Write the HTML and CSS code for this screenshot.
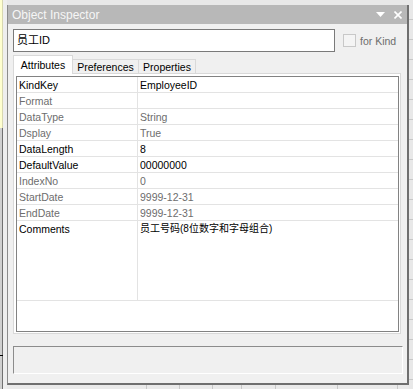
FILE: index.html
```html
<!DOCTYPE html>
<html lang="zh">
<head>
    <meta charset="UTF-8">
    <title>Object Inspector</title>
    <link rel="stylesheet" href="styles.css">
</head>
<body>
    <div class="desk">
        <div class="strip">
            <div class="note"></div>
            <div class="rest"><span class="tick"></span></div>
        </div>

        <div class="middle">
            <div class="window">
                <div class="titlebar">
                    <span class="title">Object Inspector</span>
                    <span class="buttons">
                        <svg width="9" height="5" viewBox="0 0 9 5"><polygon points="0,0 9,0 4.5,5" fill="#fff"/></svg>
                        <svg width="8" height="8" viewBox="0 0 8 8"><path d="M0.5 0.5 L7.5 7.5 M7.5 0.5 L0.5 7.5" stroke="#fff" stroke-width="1.6"/></svg>
                    </span>
                </div>

                <div class="body">
                    <div class="toprow">
                        <div class="namebox">员工ID</div>
                        <label class="forkind"><span class="chk"></span>for Kind</label>
                    </div>

                    <div class="tabs">
                        <div class="tab active">Attributes</div>
                        <div class="tab pref">Preferences</div>
                        <div class="tab prop">Properties</div>
                    </div>

                    <div class="panel">
                        <div class="grid">
                            <div class="row"><div class="key">KindKey</div><div class="val">EmployeeID</div></div>
                            <div class="row off"><div class="key">Format</div><div class="val"></div></div>
                            <div class="row off"><div class="key">DataType</div><div class="val">String</div></div>
                            <div class="row off"><div class="key">Dsplay</div><div class="val">True</div></div>
                            <div class="row"><div class="key">DataLength</div><div class="val">8</div></div>
                            <div class="row"><div class="key">DefaultValue</div><div class="val">00000000</div></div>
                            <div class="row off"><div class="key">IndexNo</div><div class="val">0</div></div>
                            <div class="row off"><div class="key">StartDate</div><div class="val">9999-12-31</div></div>
                            <div class="row off"><div class="key">EndDate</div><div class="val">9999-12-31</div></div>
                            <div class="row tall"><div class="key">Comments</div><div class="val cjk">员工号码(8位数字和字母组合)</div></div>
                            <div class="filler"></div>
                        </div>
                    </div>

                    <div class="status"></div>
                </div>
            </div>
            <div class="sheet">
                <span style="width:139px"></span>
                <span style="width:32px"></span>
                <span style="width:32px"></span>
                <span style="width:28px"></span>
                <span style="width:33px"></span>
                <span style="width:61px"></span>
                <span style="width:59px"></span>
            </div>
        </div>

        <div class="rightside"></div>
    </div>
</body>
</html>
```

FILE: styles.css
```css
body {
    margin: 0;
    padding: 0;
    background-color: #e8e8e8;
    font-family: 'Liberation Sans', Arial, sans-serif;
    font-size: 10.5px;
    color: #000;
}
.desk {
    display: flex;
    width: 413px;
    height: 389px;
    overflow: hidden;
}

/* left edge of the desktop behind */
.strip {
    width: 7px;
    display: flex;
    flex-direction: column;
    background: #eeeeee;
}
.strip .note {
    width: 2px;
    height: 128px;
    background: #ffffd0;
    border-right: 1px solid #d8d8b0;
}
.strip .rest {
    flex: 1;
    width: 2px;
    background: #d0d0d0;
    border-right: 1px solid #707070;
    position: relative;
}
.strip .tick {
    position: absolute;
    left: 0;
    top: 227px;
    width: 3px;
    height: 1px;
    background: #000;
}

.middle {
    width: 402px;
    display: flex;
    flex-direction: column;
    padding-top: 5px;
}
.window {
    height: 378px;
    border-left: 1px solid #8c8c8c;
    border-right: 2px solid #6f6f6f;
    border-bottom: 2px solid #6f6f6f;
    background: #f0f0f0;
    display: flex;
    flex-direction: column;
}
.titlebar {
    height: 19px;
    background: #b8b8b8;
    display: flex;
    align-items: center;
    justify-content: space-between;
    padding: 0 5px 0 4px;
}
.titlebar .title {
    color: #f6f6f6;
    font-size: 12px;
}
.titlebar .buttons {
    display: flex;
    align-items: center;
    gap: 9px;
}
.body {
    flex: 1;
    padding: 5px 0 0 5px;
    display: flex;
    flex-direction: column;
}
.toprow {
    display: flex;
    align-items: center;
    height: 23px;
}
.namebox {
    box-sizing: border-box;
    width: 322px;
    height: 23px;
    border: 1px solid #7a7a7a;
    background: #fff;
    padding: 0 3px;
    line-height: 21px;
    font-size: 11px;
    font-family: 'Liberation Sans', 'Noto Sans CJK SC', sans-serif;
}
.forkind {
    display: flex;
    align-items: center;
    margin-left: 8px;
    color: #6d6d6d;
    font-size: 10.5px;
}
.chk {
    box-sizing: border-box;
    width: 13px;
    height: 13px;
    border: 1px solid #c8c8c8;
    background: #f4f4f4;
    margin-right: 4px;
}

.tabs {
    display: flex;
    margin-top: 3px;
    height: 18px;
    align-items: flex-end;
}
.tab {
    box-sizing: border-box;
    height: 14px;
    border: 1px solid #d9d9d9;
    border-bottom: none;
    text-align: center;
    line-height: 14px;
    background: #f0f0f0;
}
.tab.active {
    width: 60px;
    height: 19px;
    margin-bottom: -1px;
    background: #fff;
    line-height: 19px;
    position: relative;
}
.tab.pref {
    width: 66px;
    border-left: none;
}
.tab.prop {
    width: 57px;
    border-left: none;
}

.panel {
    box-sizing: border-box;
    width: 388px;
    height: 261px;
    border: 1px solid #d9d9d9;
    background: #fff;
    padding: 2px 1px 1px 2px;
}
.grid {
    box-sizing: border-box;
    height: 256px;
    border: 1px solid #828282;
    display: flex;
    flex-direction: column;
}
.row {
    display: flex;
    height: 16px;
    box-sizing: border-box;
    border-bottom: 1px solid #e3e3e3;
    line-height: 16px;
}
.row.tall {
    height: 80px;
}
.row.off {
    color: #6d6d6d;
}
.key {
    box-sizing: border-box;
    width: 121px;
    padding-left: 2px;
    border-right: 1px solid #e3e3e3;
}
.val {
    flex: 1;
    padding-left: 2px;
}
.val.cjk {
    font-family: 'Liberation Sans', 'Noto Sans CJK SC', sans-serif;
    font-size: 10px;
}
.filler {
    flex: 1;
}

.status {
    box-sizing: border-box;
    width: 390px;
    height: 28px;
    margin-top: 12px;
    border-top: 1px solid #8c8c8c;
    border-left: 1px solid #8c8c8c;
    border-bottom: 1px solid #fff;
    border-right: 1px solid #fff;
}

/* spreadsheet behind the window */
.sheet {
    display: flex;
    flex: 1;
    background: #eaeaea;
}
.sheet span {
    border-right: 1px solid #c8c8c8;
}
.rightside {
    flex: 1;
    background: repeating-linear-gradient(to bottom, #e8e8e8 0, #e8e8e8 19px, #c8c8c8 19px, #c8c8c8 20px);
}
```
